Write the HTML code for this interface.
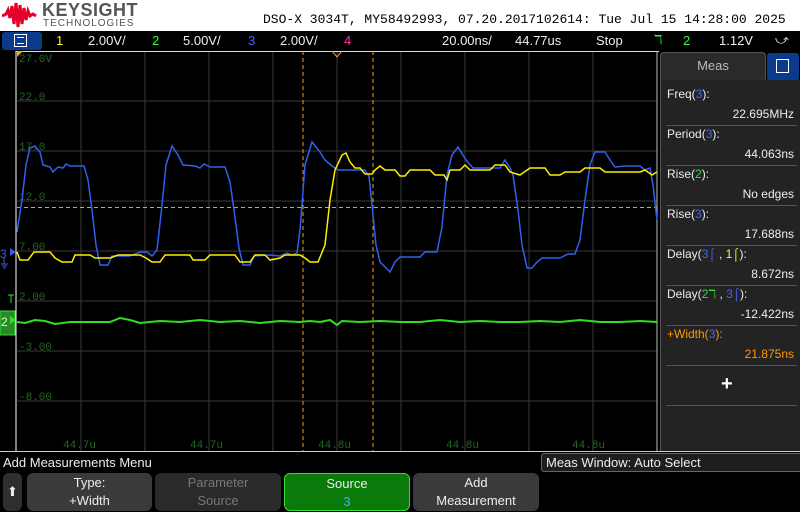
<!DOCTYPE html>
<html><head><style>
*{margin:0;padding:0;box-sizing:border-box}
body{width:800px;height:512px;background:#000;position:relative;overflow:hidden;font-family:"Liberation Sans",sans-serif}
.a{position:absolute;white-space:nowrap}
.mono{font-family:"Liberation Mono",monospace}
.btn{position:absolute;top:473px;height:38px;border-radius:6px;background:#3a3a3a;color:#eee;font-size:13px;text-align:center;line-height:18px;padding-top:1px}
.mi{position:absolute;left:6px;font-size:12px;color:#eee}
.mv{position:absolute;right:6px;font-size:12px;color:#eee}
.sep{position:absolute;left:5px;right:3px;height:1px;background:#555}
</style></head><body>
<div class="a" style="left:0;top:0;width:800px;height:31px;background:#fff"></div>
<svg class="a" style="left:2px;top:2px" width="36" height="26" viewBox="0 0 36 26"><path d="M0 14 L4 12 L6 8 L8 16 L10 4 L12 22 L14 1 L16 25 L18 3 L20 22 L22 6 L24 18 L26 9 L28 14 L31 12 L34 14" stroke="#e4002b" stroke-width="3" fill="none"/></svg>
<div class="a" style="left:42px;top:0px;font-size:18px;font-weight:bold;color:#555;letter-spacing:0.5px">KEYSIGHT</div>
<div class="a" style="left:43px;top:18px;font-size:10px;color:#555;letter-spacing:1px">TECHNOLOGIES</div>
<div class="a mono" style="left:263px;top:12px;font-size:13px;color:#000">DSO-X 3034T, MY58492993, 07.20.2017102614: Tue Jul 15 14:28:00 2025</div>
<div class="a" style="left:0;top:31px;width:800px;height:20px;background:#000;font-size:13px;color:#eee">
<div class="a" style="left:2px;top:1px;width:40px;height:18px;background:#0a3a8a;border-radius:3px"></div>
<div class="a" style="left:14px;top:3px;width:13px;height:13px;border:1.5px solid #fff"></div>
<div class="a" style="left:17px;top:6px;width:7px;height:7px;border-top:1px solid #fff;border-bottom:1px solid #fff"></div>
<span class="a" style="left:56px;top:2px;color:#ff0">1</span>
<span class="a" style="left:88px;top:2px">2.00V/</span>
<span class="a" style="left:152px;top:2px;color:#3f3">2</span>
<span class="a" style="left:183px;top:2px">5.00V/</span>
<span class="a" style="left:248px;top:2px;color:#46f">3</span>
<span class="a" style="left:280px;top:2px">2.00V/</span>
<span class="a" style="left:344px;top:2px;color:#f3a">4</span>
<span class="a" style="left:442px;top:2px">20.00ns/</span>
<span class="a" style="left:515px;top:2px">44.77us</span>
<span class="a" style="left:596px;top:2px">Stop</span>
<span class="a" style="left:654px;top:1px;color:#3f3">ℸ</span>
<span class="a" style="left:683px;top:2px;color:#3f3">2</span>
<span class="a" style="left:719px;top:2px">1.12V</span>
<span class="a" style="left:775px;top:1px">⤻</span>
</div>
<svg class="a" style="left:0;top:51px" width="660" height="401" viewBox="0 51 660 401">
<g stroke="#3a3a3a" stroke-width="1">
<path d="M81 51V451M145 51V451M209 51V451M273 51V451M337 51V451M401 51V451M465 51V451M529 51V451M593 51V451M657 51V451"/>
<path d="M17 101H657M17 151H657M17 201H657M17 251H657M17 301H657M17 351H657M17 401H657"/>
</g>
<path d="M16 51V451" stroke="#fff"/>
<path d="M16 51.5H659" stroke="#ddd"/>
<path d="M657 51V451" stroke="#bbb"/>
<g stroke="#f0a020" stroke-dasharray="4,3" stroke-width="1"><path d="M303 51V451M373 51V451M17 207.5H657"/></g>
<path d="M332 51L337 57L342 51" stroke="#f0a020" fill="none"/>
<path d="M17 51L23 51L17 57Z" fill="#f0a020"/>
<g font-family="Liberation Mono,monospace" font-size="11" fill="#1f6a1f">
<text x="19" y="62">27.0V</text><text x="19" y="100">22.0</text><text x="19" y="150">17.0</text><text x="19" y="200">12.0</text><text x="19" y="250">7.00</text><text x="19" y="300">2.00</text><text x="19" y="350">-3.00</text><text x="19" y="400">-8.00</text>
<text x="63" y="448">44.7u</text><text x="190" y="448">44.7u</text><text x="318" y="448">44.8u</text><text x="446" y="448">44.8u</text><text x="572" y="448">44.8u</text>
</g>
<polyline fill="none" stroke="#3060f0" stroke-width="1.5" points="17,232 22,200 26,165 30,148 35,146 40,152 43,165 50,167 53,172 58,167 63,168 66,164 70,166 84,166 88,180 92,210 96,245 100,265 108,265 112,256 130,256 140,252 147,252 152,256 157,250 162,205 166,165 172,146 178,155 183,165 195,166 200,168 204,164 210,167 225,167 230,182 234,210 239,248 243,265 250,265 254,256 270,255 280,256 287,253 292,255 297,253 300,230 305,165 312,142 320,152 325,160 332,166 338,170 348,170 365,170 369,176 372,205 376,245 380,262 386,268 390,272 395,262 400,257 420,257 425,252 430,252 437,252 442,227 447,175 452,155 458,147 466,160 473,168 500,168 505,160 510,168 513,175 518,210 522,245 527,268 532,268 537,262 542,258 560,258 568,254 575,254 580,240 585,200 590,165 595,152 605,152 610,160 615,167 625,166 640,166 645,170 650,168 653,185 657,220"/>
<polyline fill="none" stroke="#ffee00" stroke-width="1.5" points="17,252 20,260 28,260 34,252 50,252 55,258 62,262 72,262 75,255 90,255 95,258 110,258 118,255 140,255 146,258 152,262 160,262 165,255 190,255 193,260 205,260 210,255 235,255 240,262 250,262 255,255 265,255 270,260 280,258 285,255 300,255 305,258 310,262 318,262 325,245 330,200 335,170 342,155 346,153 350,162 355,168 360,168 365,174 372,174 375,170 380,166 385,170 395,170 400,176 405,176 410,170 430,170 435,175 444,175 447,180 450,170 460,170 465,165 470,170 490,170 495,165 505,165 510,172 520,175 530,168 545,168 550,175 560,175 565,172 580,172 585,168 600,168 605,172 640,172 645,170 652,175 657,172"/>
<polyline fill="none" stroke="#33dd22" stroke-width="2" points="17,322 25,323 35,320 45,321 55,324 70,322 95,322 110,322 120,318 130,320 140,323 160,321 180,322 200,320 220,322 240,321 260,323 280,321 300,322 310,321 320,322 330,320 337,325 342,321 360,322 380,321 400,322 420,322 440,320 460,322 480,321 500,322 520,322 540,321 560,322 580,320 600,322 620,322 640,321 657,322"/>
<path d="M10 248L16 252L10 256Z" fill="#3060f0"/>
<text x="0" y="258" font-size="12" fill="#3060f0">3</text>
<path d="M4 258V264M1 264H8M2 266H7M3 268H6" stroke="#3060f0"/>
<path d="M8 295H14M11 295V303" stroke="#3d3"/>
<rect x="0" y="311" width="15" height="24" fill="#2a8a2a" stroke="#3d3"/>
<text x="1" y="326" font-size="12" fill="#cfc">2</text>
<path d="M10 316L16 320L10 324Z" fill="#3d3"/>
</svg>
<div class="a" style="left:0;top:451px;width:800px;height:1px;background:#ccc"></div>
<div class="a" style="left:3px;top:455px;font-size:13px;color:#eee">Add Measurements Menu</div>
<div class="a" style="left:541px;top:453px;width:262px;height:19px;background:#1e1e1e;border:1px solid #666;border-radius:3px;font-size:13px;color:#eee;padding:1px 0 0 4px">Meas Window: Auto Select</div>
<div class="btn" style="left:3px;width:19px;background:#2f2f2f;font-size:13px;line-height:36px">⬆</div>
<div class="btn" style="left:27px;width:125px">Type:<br>+Width</div>
<div class="btn" style="left:155px;width:126px;background:#2a2a2a;color:#777">Parameter<br>Source</div>
<div class="btn" style="left:284px;width:126px;background:#0a7a0a;border:1px solid #3d3">Source<br><span style="color:#4af">3</span></div>
<div class="btn" style="left:413px;width:126px">Add<br>Measurement</div>
<div class="a" style="left:660px;top:52px;width:106px;height:28px;background:#2a2a2a;border:1px solid #555;border-bottom:none;border-radius:4px 4px 0 0;font-size:13px;color:#bbb;text-align:center;line-height:26px">Meas</div>
<div class="a" style="left:767px;top:53px;width:32px;height:28px;background:#0a3a8a;border-radius:3px"></div>
<div class="a" style="left:776px;top:59px;width:13px;height:14px;border:1.5px solid #fff"></div>
<div class="a" style="left:660px;top:80px;width:140px;height:371px;background:#232323;border-left:1px solid #555">
<div class="mi" style="top:7px">Freq(<span style="color:#46f">3</span>):</div><div class="mv" style="top:27px">22.695MHz</div><div class="sep" style="top:45px"></div>
<div class="mi" style="top:47px">Period(<span style="color:#46f">3</span>):</div><div class="mv" style="top:67px">44.063ns</div><div class="sep" style="top:85px"></div>
<div class="mi" style="top:87px">Rise(<span style="color:#3d3">2</span>):</div><div class="mv" style="top:107px">No edges</div><div class="sep" style="top:125px"></div>
<div class="mi" style="top:127px">Rise(<span style="color:#46f">3</span>):</div><div class="mv" style="top:147px">17.688ns</div><div class="sep" style="top:165px"></div>
<div class="mi" style="top:167px">Delay(<span style="color:#46f">3⌠</span> , <span style="color:#ff0">1⌠</span>):</div><div class="mv" style="top:187px">8.672ns</div><div class="sep" style="top:205px"></div>
<div class="mi" style="top:207px">Delay(<span style="color:#3d3">2ℸ</span> , <span style="color:#46f">3⌠</span>):</div><div class="mv" style="top:227px">-12.422ns</div><div class="sep" style="top:245px"></div>
<div class="mi" style="top:247px;color:#f90">+Width(<span style="color:#46f">3</span>):</div><div class="mv" style="top:267px;color:#f90">21.875ns</div><div class="sep" style="top:285px"></div>
<div class="a" style="left:60px;top:293px;font-size:20px;font-weight:bold;color:#fff">+</div>
<div class="sep" style="top:325px"></div>
</div>
</body></html>
